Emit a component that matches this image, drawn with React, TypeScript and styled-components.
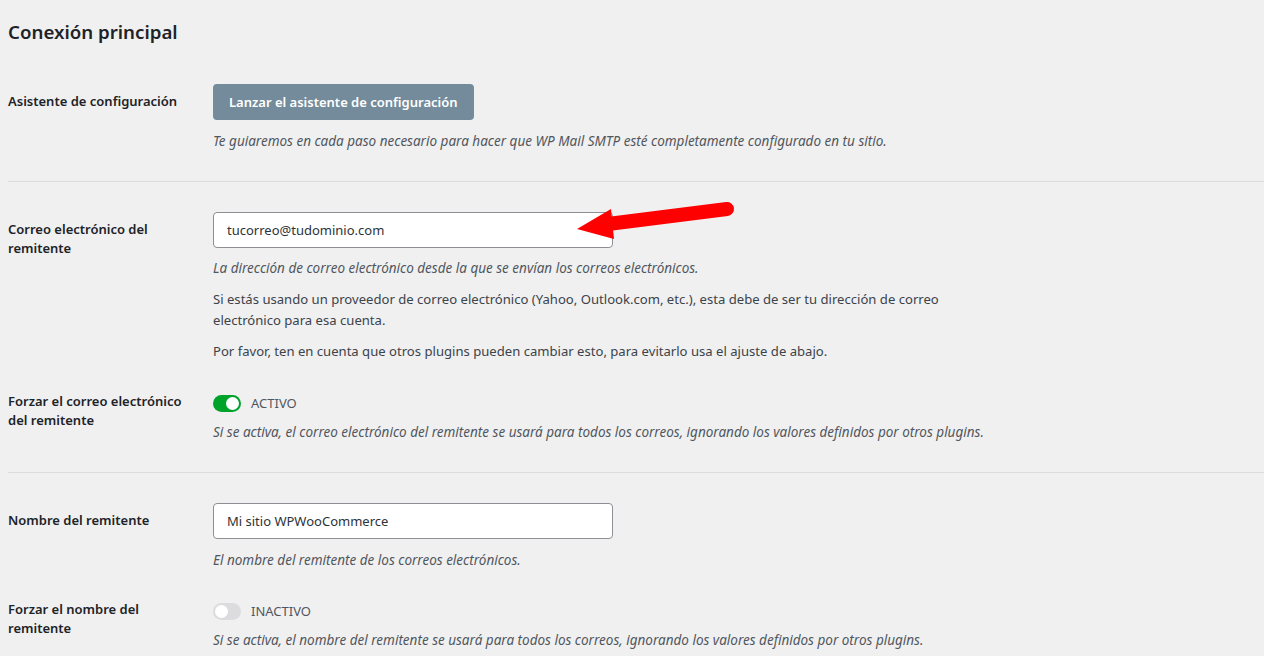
import React from "react";
import styled, { createGlobalStyle } from "styled-components";

const Global = createGlobalStyle`
  html, body { margin: 0; padding: 0; background: #f0f0f1; }
  body { font-family: "Noto Sans", "Open Sans", sans-serif; color: #3c434a; font-size: 13px; }
  * { box-sizing: border-box; }
`;

const Page = styled.div`
  position: relative;
  padding: 20px 0 0 8px;
  width: 1264px;
  height: 656px;
  overflow: hidden;
`;

const Heading = styled.h2`
  margin: 0;
  font-size: 18.7px;
  line-height: 24px;
  font-weight: 600;
  color: #1d2327;
`;

const Row = styled.div<{ $top: number; $bottom: number; $line?: boolean }>`
  display: grid;
  grid-template-columns: 205px 1fr;
  padding-top: ${(p) => p.$top}px;
  padding-bottom: ${(p) => p.$bottom}px;
  border-bottom: ${(p) => (p.$line ? "1px solid #dcdcde" : "none")};
`;

const Label = styled.div<{ $offset: number }>`
  font-size: 13px;
  line-height: 19px;
  font-weight: 600;
  color: #1d2327;
  margin-top: ${(p) => p.$offset}px;
  padding-right: 20px;
`;

const Field = styled.div`
  display: flex;
  flex-direction: column;
  align-items: flex-start;
`;

const Button = styled.button`
  height: 36px;
  padding: 0 16px;
  border: none;
  border-radius: 4px;
  background: #738b9b;
  color: #fff;
  font-family: inherit;
  font-size: 13px;
  font-weight: 600;
`;

const Input = styled.input`
  width: 400px;
  height: 36px;
  border: 1px solid #8c8f94;
  border-radius: 4px;
  background: #fff;
  padding: 0 13px;
  font-family: inherit;
  font-size: 13px;
  color: #2c3338;
`;

const Desc = styled.p<{ $mt: number; $lh?: number }>`
  margin: ${(p) => p.$mt}px 0 0;
  font-size: 13.5px;
  line-height: ${(p) => p.$lh ?? 20}px;
  font-style: italic;
  color: #50575e;
  max-width: 790px;
`;

const Note = styled.p`
  margin: 10px 0 0;
  font-size: 13.1px;
  line-height: 21px;
  color: #3c434a;
  max-width: 790px;
`;

const ToggleLine = styled.div`
  display: flex;
  align-items: center;
  gap: 10px;
  height: 20px;
`;

const Switch = styled.span<{ $on: boolean }>`
  position: relative;
  display: inline-block;
  width: 28px;
  height: 17px;
  border-radius: 9px;
  background: ${(p) => (p.$on ? "#00a32a" : "#dcdcde")};
  &::after {
    content: "";
    position: absolute;
    top: 2px;
    left: ${(p) => (p.$on ? "13px" : "2px")};
    width: 13px;
    height: 13px;
    border-radius: 50%;
    background: #fff;
  }
`;

const SwitchText = styled.span`
  font-size: 13px;
  color: #50575e;
`;

const Arrow = styled.svg`
  position: absolute;
  left: 570px;
  top: 195px;
`;

export default function App() {
  return (
    <Page>
      <Global />
      <Heading>Conexión principal</Heading>

      <Row $top={40} $bottom={30} $line>
        <Label $offset={8}>Asistente de configuración</Label>
        <Field>
          <Button>Lanzar el asistente de configuración</Button>
          <Desc $mt={11}>
            Te guiaremos en cada paso necesario para hacer que WP Mail SMTP esté completamente configurado en tu sitio.
          </Desc>
        </Field>
      </Row>

      <Row $top={30} $bottom={0}>
        <Label $offset={7.5}>Correo electrónico del remitente</Label>
        <Field>
          <Input defaultValue="tucorreo@tudominio.com" />
          <Desc $mt={10} $lh={21}>
            La dirección de correo electrónico desde la que se envían los correos electrónicos.
          </Desc>
          <Note>
            Si estás usando un proveedor de correo electrónico (Yahoo, Outlook.com, etc.), esta debe de ser tu dirección de correo electrónico para esa cuenta.
          </Note>
          <Note>
            Por favor, ten en cuenta que otros plugins pueden cambiar esto, para evitarlo usa el ajuste de abajo.
          </Note>
        </Field>
      </Row>

      <Row $top={31} $bottom={30} $line>
        <Label $offset={-1.5}>Forzar el correo electrónico del remitente</Label>
        <Field>
          <ToggleLine>
            <Switch $on />
            <SwitchText>ACTIVO</SwitchText>
          </ToggleLine>
          <Desc $mt={9}>
            Si se activa, el correo electrónico del remitente se usará para todos los correos, ignorando los valores definidos por otros plugins.
          </Desc>
        </Field>
      </Row>

      <Row $top={30} $bottom={0}>
        <Label $offset={7.5}>Nombre del remitente</Label>
        <Field>
          <Input defaultValue="Mi sitio WPWooCommerce" />
          <Desc $mt={11}>El nombre del remitente de los correos electrónicos.</Desc>
        </Field>
      </Row>

      <Row $top={31} $bottom={20}>
        <Label $offset={-1.5}>Forzar el nombre del remitente</Label>
        <Field>
          <ToggleLine>
            <Switch $on={false} />
            <SwitchText>INACTIVO</SwitchText>
          </ToggleLine>
          <Desc $mt={9}>
            Si se activa, el nombre del remitente se usará para todos los correos, ignorando los valores definidos por otros plugins.
          </Desc>
        </Field>
      </Row>

      <Arrow width="170" height="55" viewBox="0 0 170 55">
        <line x1="42" y1="28.5" x2="157" y2="14" stroke="#ff0000" strokeWidth="14" strokeLinecap="round" />
        <polygon points="7,34 41,14 44,44" fill="#ff0000" />
      </Arrow>
    </Page>
  );
}
